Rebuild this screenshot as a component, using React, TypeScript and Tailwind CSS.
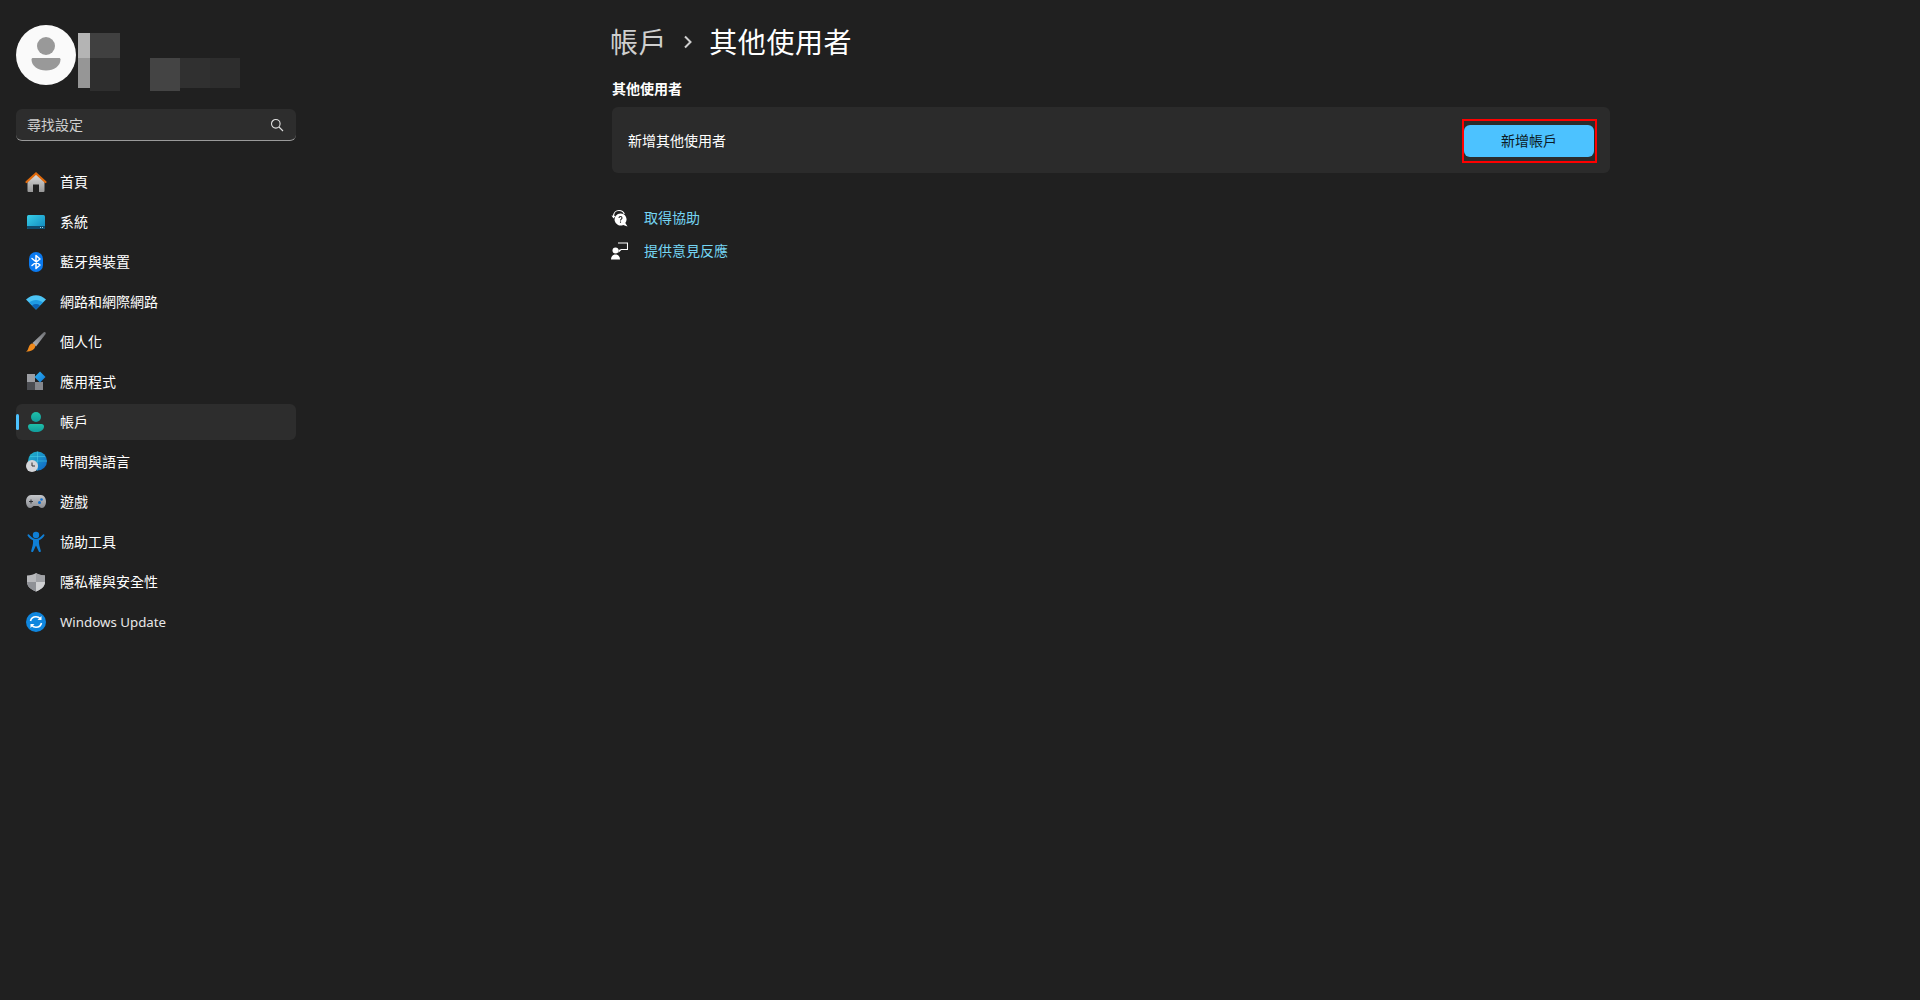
import type { ReactNode } from "react";

function Defs() {
  return (
    <svg width="0" height="0" className="absolute">
      <defs>
        <linearGradient id="homeBody" x1="0" y1="0" x2="0" y2="1">
          <stop offset="0" stopColor="#dcdcdc" />
          <stop offset="1" stopColor="#979797" />
        </linearGradient>
        <linearGradient id="sysPanel" x1="0" y1="0" x2="1" y2="1">
          <stop offset="0" stopColor="#38cfe8" />
          <stop offset="1" stopColor="#0f86bd" />
        </linearGradient>
        <linearGradient id="brushHandle" x1="1" y1="0" x2="0" y2="1">
          <stop offset="0" stopColor="#6c6e72" />
          <stop offset="1" stopColor="#b4b6ba" />
        </linearGradient>
        <linearGradient id="personFill" x1="0" y1="0" x2="0" y2="1">
          <stop offset="0" stopColor="#1fbfa8" />
          <stop offset="1" stopColor="#119c9c" />
        </linearGradient>
        <linearGradient id="globeFill" x1="0" y1="0" x2="1" y2="1">
          <stop offset="0" stopColor="#22b8c8" />
          <stop offset="1" stopColor="#0f62c8" />
        </linearGradient>
        <linearGradient id="padFill" x1="0" y1="0" x2="0" y2="1">
          <stop offset="0" stopColor="#c4c6ca" />
          <stop offset="1" stopColor="#8b8d92" />
        </linearGradient>
        <linearGradient id="diamondFill" x1="0" y1="0" x2="1" y2="1">
          <stop offset="0" stopColor="#35b4f0" />
          <stop offset="1" stopColor="#0b78d8" />
        </linearGradient>
      </defs>
    </svg>
  );
}

function Icon({ children }: { children: ReactNode }) {
  return (
    <svg width="24" height="24" viewBox="0 0 24 24" className="shrink-0">
      {children}
    </svg>
  );
}

const icons: Record<string, ReactNode> = {
  home: (
    <Icon>
      <path d="M3.500 11 12 4l8.500 7v10a1 1 0 0 1-1 1H15v-7.500H9V22H4.500a1 1 0 0 1-1-1z" fill="url(#homeBody)" />
      <path d="M2.500 12 12 3.500l9.500 8.500" fill="none" stroke="#e06a0c" strokeWidth="2.200" strokeLinecap="round" />
    </Icon>
  ),
  system: (
    <Icon>
      <rect x="3" y="5" width="18" height="14" rx="1.500" fill="url(#sysPanel)" />
      <path d="M3 16h18v1.500a1.500 1.500 0 0 1-1.500 1.500h-15A1.500 1.500 0 0 1 3 17.500z" fill="#0f4c6e" />
      <rect x="16" y="17" width="1" height="1" fill="#9fd6ea" />
      <rect x="18" y="17" width="1" height="1" fill="#9fd6ea" />
    </Icon>
  ),
  bluetooth: (
    <Icon>
      <rect x="5" y="2" width="14" height="20" rx="7" fill="#0a7af0" />
      <path d="m8 8.500 8 6.500-4 3.500V5.500l4 3.500-8 6.500" fill="none" stroke="#fff" strokeWidth="1.500" strokeLinejoin="round" strokeLinecap="round" />
    </Icon>
  ),
  network: (
    <Icon>
      <path d="M2 9.500C8 3.800 16 3.800 22 9.500L12 19.500z" fill="#4cc4f4" />
      <path d="M5 12.500C9 9 15 9 19 12.500L12 19.500z" fill="#1f9be4" />
      <path d="M8 15.500C10.500 13.600 13.500 13.600 16 15.500L12 19.500z" fill="#0c62b4" />
    </Icon>
  ),
  brush: (
    <Icon>
      <path d="M19.800 2.300c1.100-.8 2.600.5 1.800 1.700L12 16.500l-3.500-3.500z" fill="url(#brushHandle)" />
      <path d="M7.800 13.500c1.900-.6 3.900 1.300 3.400 3.200-.8 2.900-4 4.800-9.200 5 1.900-1.400 2.200-3.200 2.900-5 .5-1.400 1.600-2.800 2.900-3.200z" fill="#f08a1c" />
    </Icon>
  ),
  apps: (
    <Icon>
      <rect x="3" y="4" width="8" height="8" fill="#9c9ea3" />
      <rect x="3" y="12" width="8" height="8" fill="#4a4c51" />
      <rect x="11" y="12" width="8" height="8" fill="#85878c" />
      <path d="m16 1.500 5.500 5.500-5.500 5.500L10.500 7z" fill="url(#diamondFill)" />
    </Icon>
  ),
  accounts: (
    <Icon>
      <circle cx="12" cy="7" r="5" fill="url(#personFill)" />
      <path d="M6.500 14h11A2.500 2.500 0 0 1 20 16.500c0 3.500-3.500 5.500-8 5.500s-8-2-8-5.500A2.500 2.500 0 0 1 6.500 14z" fill="url(#personFill)" />
    </Icon>
  ),
  time: (
    <Icon>
      <circle cx="13.500" cy="11" r="9.500" fill="url(#globeFill)" />
      <path d="M13.500 1.500v19M4 11h19M6 6.500h15" stroke="#4fd0e8" strokeWidth="0.500" fill="none" />
      <circle cx="8" cy="16" r="6" fill="#d4d5d8" />
      <path d="M8 12.500V16h3" fill="none" stroke="#333" strokeWidth="1" />
    </Icon>
  ),
  gaming: (
    <Icon>
      <path d="M7 5h10c3 0 5 3 5 6.500 0 3.500-1.500 6.500-4 6.500-2 0-3-2-4-2h-4c-1 0-2 2-4 2-2.500 0-4-3-4-6.500C2 8 4 5 7 5z" fill="url(#padFill)" />
      <path d="M5 11.500h4M7 9.500v4" stroke="#2e3036" strokeWidth="1" />
      <circle cx="17.500" cy="9.500" r="1.300" fill="#0f6fd0" />
      <circle cx="15.500" cy="12.500" r="1.500" fill="#0f6fd0" />
    </Icon>
  ),
  accessibility: (
    <Icon>
      <circle cx="12" cy="5" r="3.200" fill="#0f7fd6" />
      <path d="M5 4.500c-.8-.7-2 .4-1.300 1.300 1.400 2 3.200 3.500 5.300 4.500.5 3.500-1 7.500-1.800 10.400-.4 1.200 1.400 1.800 2 .8L12 15.500l2.800 6c.6 1 2.400.4 2-.8-.8-2.900-2.300-6.900-1.800-10.400 2.100-1 3.900-2.500 5.300-4.500.7-.9-.5-2-1.300-1.300-1.800 2-4.200 4.500-7 4.500S6.800 6.500 5 4.500z" fill="#0f7fd6" />
    </Icon>
  ),
  privacy: (
    <Icon>
      <path d="M12 3c2 1.500 5.500 2.500 9 2.500V12c0 4.500-4 7.500-9 9.500C7 19.500 3 16.500 3 12V5.500C6.500 5.500 10 4.500 12 3z" fill="#b8b9bc" />
      <path d="M12 3c2 1.500 5.500 2.500 9 2.500V12h-9z" fill="#a0a2a6" />
      <path d="M12 12H3c0 4.500 4 7.500 9 9.500z" fill="#8f9196" />
      <path d="M12 12h9c0 4.500-4 7.500-9 9.500z" fill="#d0d1d3" />
    </Icon>
  ),
  update: (
    <Icon>
      <circle cx="12" cy="12" r="10" fill="#0f86de" />
      <path d="M6.500 11c.6-2.700 2.800-4.300 5.500-4.300 1.800 0 3.300.8 4.400 2.100M17.500 13c-.6 2.700-2.800 4.300-5.500 4.300-1.800 0-3.300-.8-4.400-2.100" fill="none" stroke="#fff" strokeWidth="1.600" />
      <path d="M17.500 6v4h-4z" fill="#fff" />
      <path d="M6.500 18v-4h4z" fill="#fff" />
    </Icon>
  ),
};

const navItems = [
  { key: "home", label: "首頁" },
  { key: "system", label: "系統" },
  { key: "bluetooth", label: "藍牙與裝置" },
  { key: "network", label: "網路和網際網路" },
  { key: "brush", label: "個人化" },
  { key: "apps", label: "應用程式" },
  { key: "accounts", label: "帳戶", active: true },
  { key: "time", label: "時間與語言" },
  { key: "gaming", label: "遊戲" },
  { key: "accessibility", label: "協助工具" },
  { key: "privacy", label: "隱私權與安全性" },
  { key: "update", label: "Windows Update", latin: true },
];

function NavRow({ item }: { item: (typeof navItems)[number] }) {
  return (
    <a
      className={
        item.active
          ? "relative flex h-9 items-center gap-[12px] rounded-md bg-[#2d2d2d] pl-2 text-sm text-white"
          : "flex h-9 items-center gap-[12px] rounded-md pl-2 text-sm text-white"
      }
    >
      {item.active && <span className="absolute top-[10px] left-0 h-4 w-[3px] rounded-full bg-[#4cc2ff]" />}
      {icons[item.key]}
      <span className={item.latin ? "text-[13.300px] text-[#e8e8e8]" : ""}>{item.label}</span>
    </a>
  );
}

function Profile() {
  return (
    <div className="flex h-[66px] items-start">
      <div className="flex size-[60px] items-center justify-center rounded-full bg-[#fafafa]">
        <svg width="32" height="38" viewBox="0 0 32 38">
          <circle cx="16" cy="10" r="9" fill="#999" />
          <path d="M3 22h26c1 0 1.500.6 1.500 1.500 0 6.500-6.500 11-14.500 11S1.500 30 1.500 23.500C1.500 22.600 2 22 3 22z" fill="#999" />
        </svg>
      </div>
      <div className="mt-2 ml-[2px] flex">
        <div className="flex w-3 flex-col">
          <div className="h-[25px] bg-[#b4b4b4]" />
          <div className="h-[30px] bg-[#969696]" />
        </div>
        <div className="flex w-[30px] flex-col">
          <div className="h-[25px] bg-[#404040]" />
          <div className="h-[33px] bg-[#2e2e2e]" />
        </div>
      </div>
      <div className="mt-[33px] ml-[30px] flex">
        <div className="h-[33px] w-[30px] bg-[#444444]" />
        <div className="h-[30px] w-[30px] bg-[#303030]" />
        <div className="h-[30px] w-[30px] bg-[#2d2d2d]" />
      </div>
    </div>
  );
}

export default function App() {
  return (
    <div className="flex min-h-[1000px] bg-[#202020] font-['Noto_Sans','Noto_Sans_CJK_TC',sans-serif] text-white">
      <Defs />
      <aside className="w-[312px] shrink-0 px-4 pt-[25px]">
        <Profile />
        <div className="mt-[18px] flex h-8 items-center justify-between rounded-md border-b border-[#9a9a9a] bg-[#2d2d2d] pr-3 pl-[11px] text-sm text-[#cfcfcf]">
          <span>尋找設定</span>
          <svg width="14" height="14" viewBox="0 0 14 14" fill="none" stroke="#e0e0e0" strokeWidth="1.100">
            <circle cx="5.800" cy="5.800" r="4.300" />
            <path d="m9 9 4 4" />
          </svg>
        </div>
        <nav className="mt-[23px] flex flex-col gap-1">
          {navItems.map((item) => (
            <NavRow key={item.key} item={item} />
          ))}
        </nav>
      </aside>

      <main className="ml-[300px] w-[998px] pt-[21px]">
        <h1 className="-ml-[2px] flex h-[42px] items-center text-[28px] leading-[42px] font-normal tracking-[0.6px]">
          <span className="text-[#cfcfcf]">帳戶</span>
          <svg width="12" height="14" viewBox="0 0 12 14" fill="none" stroke="#cfcfcf" strokeWidth="2" className="mr-[15px] ml-[15px]">
            <path d="m3 1.500 5.500 5.500-5.500 5.500" />
          </svg>
          <span>其他使用者</span>
        </h1>
        <h2 className="mt-4 text-sm leading-5 font-bold">其他使用者</h2>
        <section className="mt-2 flex h-[66px] items-center justify-between rounded-md bg-[#2b2b2b] pt-[2px] pr-[13px] pl-4 text-sm">
          <span>新增其他使用者</span>
          <div className="border-2 border-[#ff0000] py-1 pr-[1px] pl-0">
            <button type="button" className="h-8 w-[130px] rounded-md bg-[#4cc2ff] text-sm text-[#0c1a24]">
              新增帳戶
            </button>
          </div>
        </section>
        <div className="mt-[35px] -ml-px flex flex-col gap-[13px] text-sm text-[#75d5f3]">
          <a className="flex h-5 items-center gap-4">
            <svg width="17" height="18" viewBox="0 0 17 18" className="shrink-0">
              <path d="M2.500 7.500C2.500 3.800 5 1.500 8 1.500c2.500 0 4.500 1.300 5.300 3.500" fill="none" stroke="#fff" strokeWidth="1.200" />
              <path d="m.5 6.500 2 3 2-2.500z" fill="#fff" />
              <path d="M9.500 4.500a6 6 0 0 1 4.800 9.600l2.200 3.400-4.300-1.600A6 6 0 1 1 9.500 4.500z" fill="#fff" />
              <path d="M8 9c0-2 3-2 3 0 0 1.200-1.500 1-1.500 2.400M9.500 12.500v1.300" fill="none" stroke="#202020" strokeWidth="1.100" />
            </svg>
            <span>取得協助</span>
          </a>
          <a className="flex h-5 items-center gap-4">
            <svg width="17" height="18" viewBox="0 0 17 18" className="shrink-0">
              <circle cx="4.500" cy="8.500" r="3" fill="#fff" />
              <path d="M0 17.500c0-3 1.500-5 4.500-5s4.500 2 4.500 5z" fill="#fff" />
              <path d="M7 1h9.500v6.500H10l-2 2V7.500" fill="none" stroke="#fff" strokeWidth="1.100" />
            </svg>
            <span>提供意見反應</span>
          </a>
        </div>
      </main>
    </div>
  );
}
